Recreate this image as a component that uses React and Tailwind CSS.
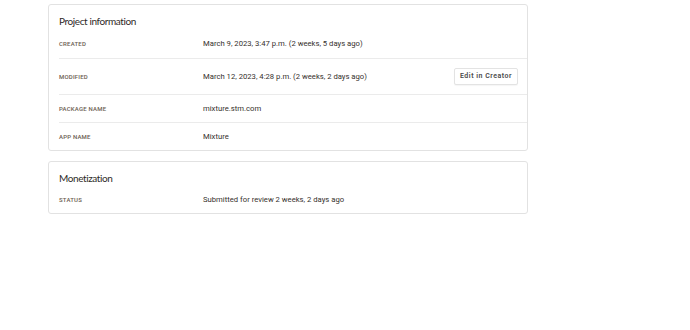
import React from 'react';

const rows = [
  { label: 'CREATED', value: 'March 9, 2023, 3:47 p.m. (2 weeks, 5 days ago)', h: 'h-[29px]' },
  { label: 'MODIFIED', value: 'March 12, 2023, 4:28 p.m. (2 weeks, 2 days ago)', action: 'Edit in Creator', h: 'h-[36px]' },
  { label: 'PACKAGE NAME', value: 'mixture.stm.com', h: 'h-[28px]' },
  { label: 'APP NAME', value: 'Mixture', h: 'h-[28px]' },
];

function Row({ label, value, action, first, h }) {
  return (
    <div className={`flex items-center ml-[10px] pr-[9px] ${first ? '' : 'border-t border-[#ebebeb]'} ${h}`}>
      <div className="w-[144px] shrink-0 text-[6px] leading-[8px] font-medium tracking-[0.2px] text-[#6b5d50]">{label}</div>
      <div className="flex-1 text-[7.7px] leading-[10px] text-[#35302c]">{value}</div>
      {action && (
        <button className="h-[17px] px-[5px] rounded-[2px] border border-[#e3e3e3] bg-white text-[7px] font-semibold tracking-[0.5px] text-[#4a4a4a] shadow-[0_1px_1px_rgba(0,0,0,0.04)]">
          {action}
        </button>
      )}
    </div>
  );
}

function Card({ title, children }) {
  return (
    <div className="w-[480px] rounded-[3px] border border-[#e2e2e2] bg-white">
      <div className="pl-[10px] pt-[9px] h-[24px] text-[10px] leading-[14px] tracking-[-0.4px] text-[#2e2a27]" style={{ fontFamily: 'Lato, "Open Sans", sans-serif' }}>
        {title}
      </div>
      {children}
    </div>
  );
}

export default function App() {
  return (
    <div className="w-[690px] h-[330px] bg-white pl-[48px] pt-[4px] flex flex-col gap-[10px]" style={{ fontFamily: 'Roboto, "Liberation Sans", sans-serif' }}>
      <Card title="Project information">
        {rows.map((r, i) => (
          <Row key={r.label} {...r} first={i === 0} />
        ))}
      </Card>
      <Card title="Monetization">
        <Row label="STATUS" value="Submitted for review 2 weeks, 2 days ago" h="h-[27px]" first />
      </Card>
    </div>
  );
}
